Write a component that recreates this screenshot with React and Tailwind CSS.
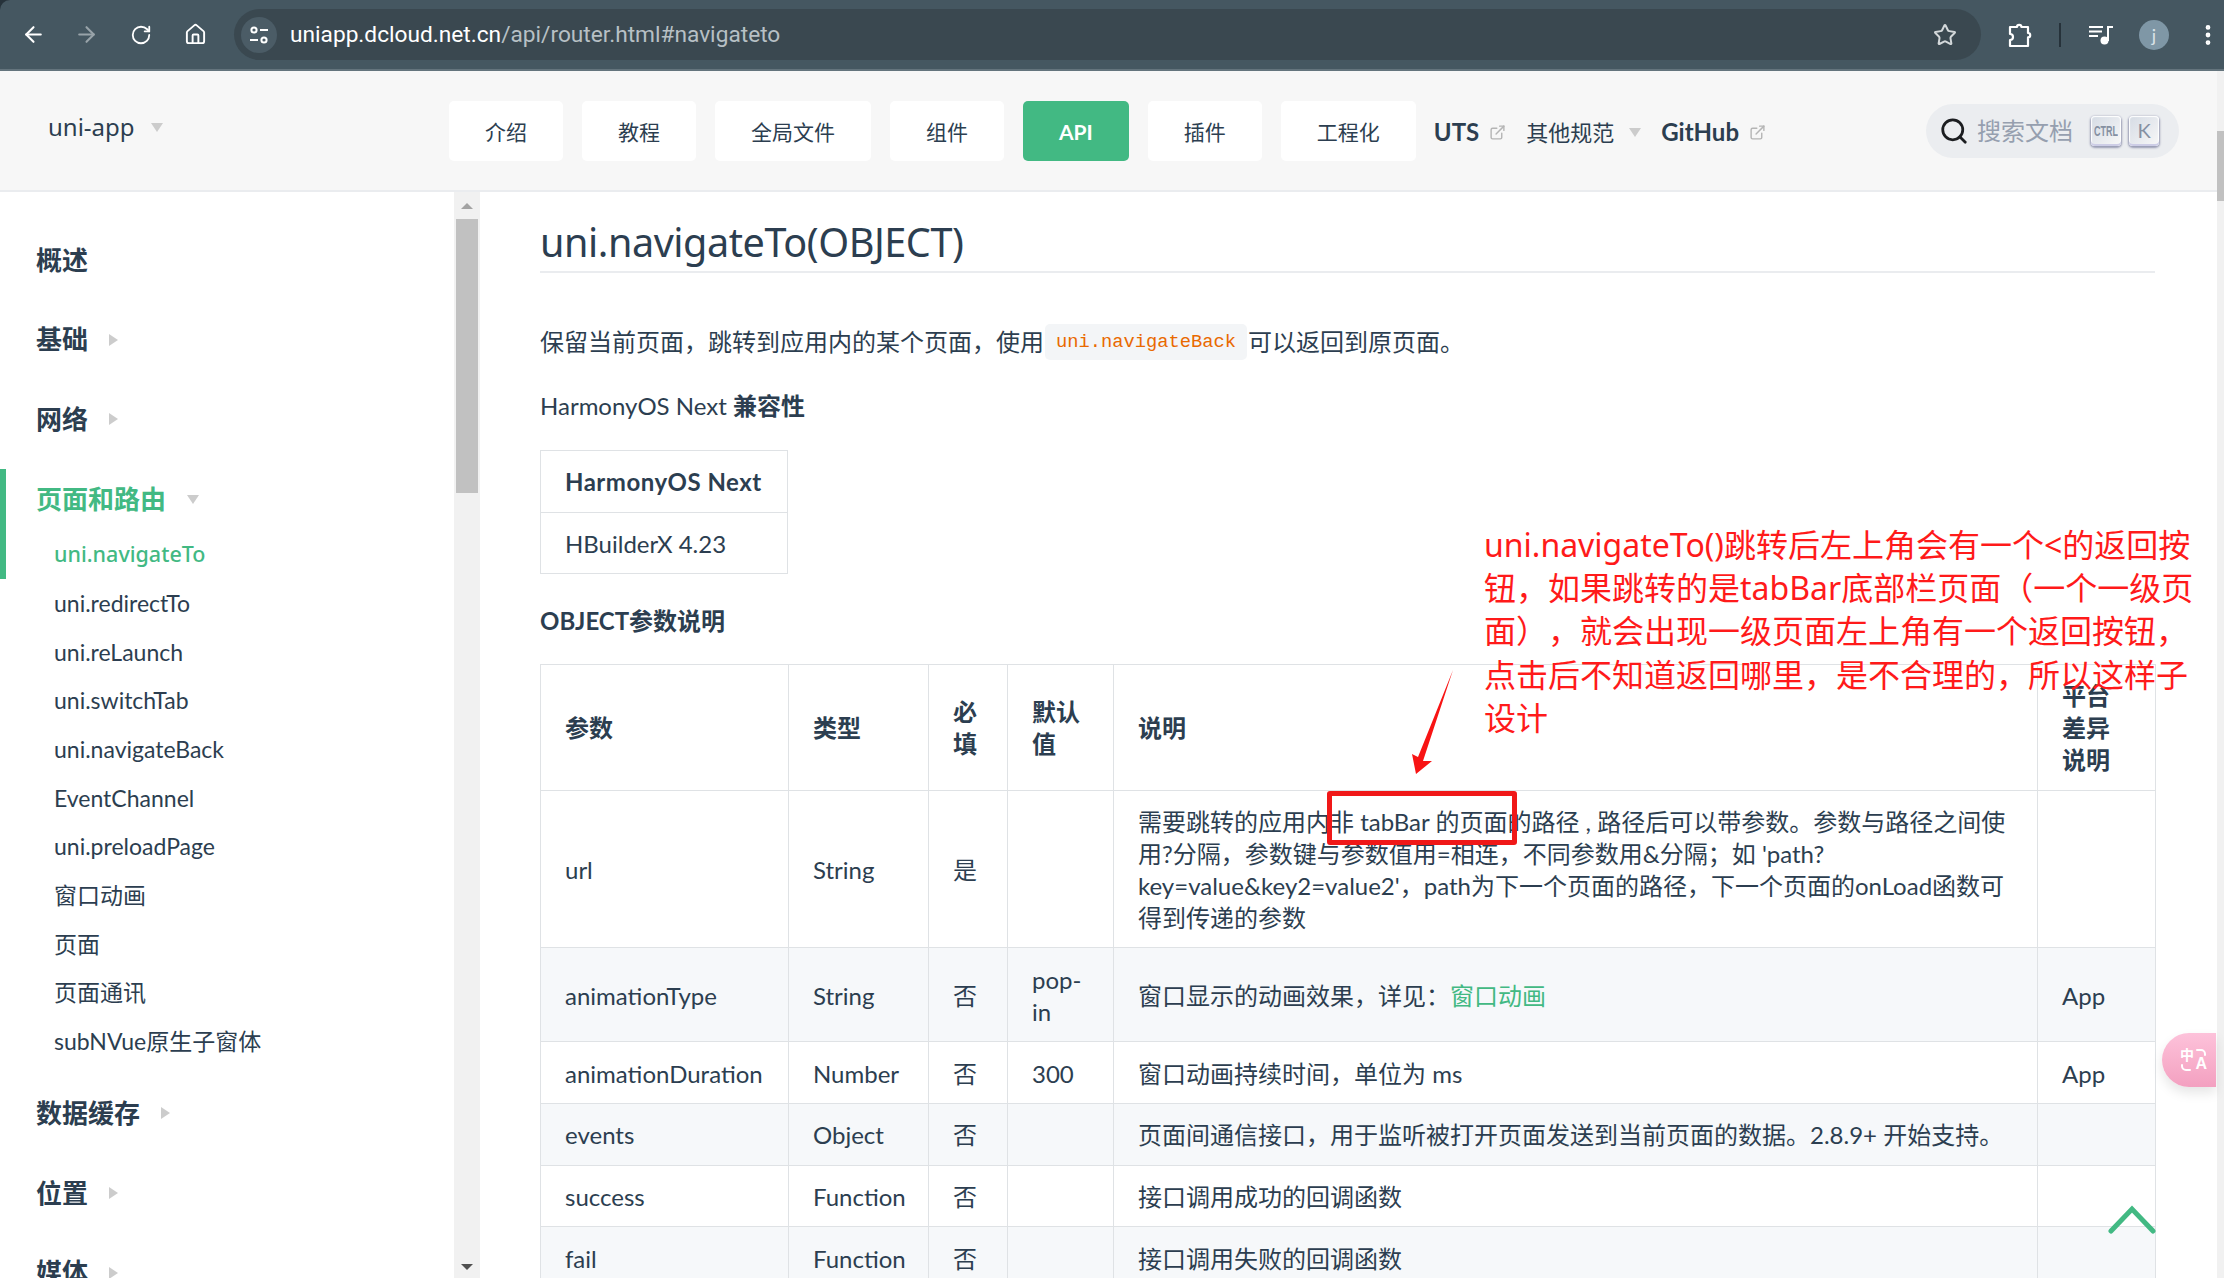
import { ArrowLeft, ArrowRight, RotateCw, Home, Star, EllipsisVertical, Search, ExternalLink } from 'lucide-react'

const navItems = [
  { label: '介绍' },
  { label: '教程' },
  { label: '全局文件' },
  { label: '组件' },
  { label: 'API', active: true },
  { label: '插件' },
  { label: '工程化' },
]

const subItems = [
  'uni.navigateTo',
  'uni.redirectTo',
  'uni.reLaunch',
  'uni.switchTab',
  'uni.navigateBack',
  'EventChannel',
  'uni.preloadPage',
  '窗口动画',
  '页面',
  '页面通讯',
  'subNVue原生子窗体',
]

const rows = [
  ['animationType', 'String', '否', 'pop-in', <>窗口显示的动画效果，详见：<span className="text-[#42b983]">窗口动画</span></>, 'App'],
  ['animationDuration', 'Number', '否', '300', '窗口动画持续时间，单位为 ms', 'App'],
  ['events', 'Object', '否', '', '页面间通信接口，用于监听被打开页面发送到当前页面的数据。2.8.9+ 开始支持。', ''],
  ['success', 'Function', '否', '', '接口调用成功的回调函数', ''],
  ['fail', 'Function', '否', '', '接口调用失败的回调函数', ''],
]

const noteLines = [
  'uni.navigateTo()跳转后左上角会有一个<的返回按',
  '钮，如果跳转的是tabBar底部栏页面（一个一级页',
  '面），就会出现一级页面左上角有一个返回按钮，',
  '点击后不知道返回哪里，是不合理的，所以这样子',
  '设计',
]

const keyCap = "flex h-[30px] w-[30px] items-center justify-center rounded-[4px] bg-[linear-gradient(-225deg,#d5dbe4,#f8f8f8)] pb-[2px] text-[#8590a2] shadow-[inset_0_-2px_0_0_#cdcde6,inset_0_0_1px_1px_#fff,0_1px_2px_1px_rgba(30,35,90,0.4)]"

function Caret({ right = false, className = '' }) {
  return right ? (
    <span className={`inline-block h-0 w-0 border-y-[6px] border-l-[9px] border-y-transparent border-l-[#cccccc] ${className}`} />
  ) : (
    <span className={`inline-block h-0 w-0 border-x-[6px] border-t-[9px] border-x-transparent border-t-[#cccccc] ${className}`} />
  )
}

function ChromeBar() {
  return (
    <div className="bg-[#26323a]">
      <div className="flex h-[69px] items-center rounded-tl-[10px] bg-[#455761] text-white">
        <div className="flex w-[234px] items-center">
          <ArrowLeft size={25} strokeWidth={2} className="ml-[21px]" />
          <ArrowRight size={25} strokeWidth={2} className="ml-[28px] text-[#98a3a9]" />
          <RotateCw size={22} strokeWidth={2} className="ml-[31px]" />
          <Home size={23} strokeWidth={2} className="ml-[32px]" />
        </div>
        <div className="flex h-[51px] w-[1747px] items-center rounded-full bg-[#3a4850] pl-[7px] pr-[24px]">
          <div className="flex h-[36px] w-[36px] items-center justify-center rounded-full bg-[#4b5c66]">
            <svg width="22" height="22" viewBox="0 0 22 22" fill="none" stroke="white" strokeWidth="2">
              <circle cx="6" cy="6" r="2.6" />
              <path d="M12 6h8M2 16h8" />
              <circle cx="16" cy="16" r="2.6" />
            </svg>
          </div>
          <div className="ml-[13px] mt-[1px] font-['Roboto',sans-serif] text-[22.7px] leading-none text-[#b7c0c5]">
            <span className="text-white">uniapp.dcloud.net.cn</span>/api/router.html#navigateto
          </div>
          <Star size={24} strokeWidth={2} className="ml-auto text-[#d3d8da]" />
        </div>
        <svg className="ml-[26px]" width="26" height="26" viewBox="0 0 26 26" fill="none" stroke="white" strokeWidth="2.2" strokeLinejoin="round">
          <path d="M3 5h7a2.2 2.2 0 0 1 4.4 0H21v6a2.2 2.2 0 0 1 0 4.4V24H3v-6a3 3 0 0 0 0-6z" />
        </svg>
        <div className="ml-[26px] h-[24px] w-[2px] bg-[#26323a]" />
        <svg className="ml-[28px]" width="25" height="20" viewBox="0 0 25 20" fill="none" stroke="white" strokeWidth="2">
          <path d="M0 2h14M0 6.5h13M0 11h9M19 16V2h5" />
          <circle cx="15.5" cy="15.5" r="4" fill="white" stroke="none" />
        </svg>
        <div className="ml-[25px] flex h-[30px] w-[30px] items-center justify-center rounded-full bg-[#7f97a6] text-[18px] leading-none text-[#dbe3e8]">j</div>
        <EllipsisVertical size={26} strokeWidth={2.4} className="ml-[26px]" />
      </div>
      <div className="h-[2px] bg-[#64747d]" />
    </div>
  )
}

function Header() {
  return (
    <header className="flex h-[121px] shrink-0 items-center border-b-2 border-[#eaecef] bg-[#f7f7f7] pt-[1px] text-[#2c3e50]">
      <div className="-mt-[8px] flex w-[449px] items-center pl-[48px] font-['Noto_Sans',sans-serif] text-[24px]">
        uni-app
        <Caret className="ml-[16px]" />
      </div>
      <nav className="flex items-center gap-[19px]">
        {navItems.map((n) => (
          <a
            key={n.label}
            className={`flex h-[60px] items-center rounded-[5px] px-[36px] pt-[2px] text-[21px] ${n.active ? 'bg-[#42b983] font-bold text-white' : 'bg-white text-[#2c3e50]'}`}
          >
            {n.label}
          </a>
        ))}
      </nav>
      <div className="ml-[18px] mt-[2px] flex items-center text-[24px] font-bold">
        UTS
        <ExternalLink size={17} className="ml-[10px] text-[#b5b5b5]" />
      </div>
      <div className="ml-[20px] mt-[2px] flex items-center text-[22px]">
        其他规范
        <Caret className="ml-[15px]" />
      </div>
      <div className="ml-[20px] mt-[2px] flex items-center text-[24px] font-bold">
        GitHub
        <ExternalLink size={17} className="ml-[10px] text-[#b5b5b5]" />
      </div>
      <div className="ml-auto mr-[38px] flex h-[54px] w-[253px] items-center rounded-full bg-[#ebedf0] pl-[13px]">
        <Search size={30} strokeWidth={2.2} className="text-[#1c1e21]" />
        <span className="ml-[8px] text-[24px] text-[#969faf]">搜索文档</span>
        <kbd className={`ml-[18px] font-['Liberation_Sans',sans-serif] ${keyCap}`}>
          <span className="inline-block scale-x-[0.6] text-[15px] font-bold leading-none">CTRL</span>
        </kbd>
        <kbd className={`ml-[8px] font-['Lato',sans-serif] text-[20px] font-normal leading-none ${keyCap}`}>K</kbd>
      </div>
    </header>
  )
}

function SectionHead({ label, caret, active, first }) {
  return (
    <div className={`flex h-[48px] items-center text-[26px] font-bold ${first ? '' : 'mt-[31.7px]'} ${active ? 'text-[#42b983]' : 'text-[#2c3e50]'}`}>
      {label}
      {caret === 'right' && <Caret right className="ml-[21px]" />}
      {caret === 'down' && <Caret className="ml-[21px]" />}
    </div>
  )
}

function Sidebar() {
  return (
    <aside className="relative flex w-[480px] shrink-0">
      <div className="absolute left-0 top-[277px] h-[110px] w-[6px] bg-[#42b983]" />
      <div className="min-w-0 flex-1 overflow-hidden pl-[36px] pt-[44px]">
        <SectionHead label="概述" first />
        <SectionHead label="基础" caret="right" />
        <SectionHead label="网络" caret="right" />
        <SectionHead label="页面和路由" caret="down" active />
        <ul className="mt-[7px] pl-[18px] text-[23px] text-[#2c3e50]">
          {subItems.map((s, i) => (
            <li key={s} className={`flex h-[48.7px] items-center ${i === 0 ? "font-['Noto_Sans',sans-serif] text-[21.5px] font-medium text-[#42b983]" : ''}`}>{s}</li>
          ))}
        </ul>
        <div className="-mt-[8px]">
          <SectionHead label="数据缓存" caret="right" />
          <SectionHead label="位置" caret="right" />
          <SectionHead label="媒体" caret="right" />
        </div>
      </div>
      <div className="flex w-[26px] shrink-0 flex-col items-center bg-[#f1f1f1] px-[2px]">
        <div className="flex h-[27px] items-center">
          <span className="h-0 w-0 border-x-[6px] border-b-[6px] border-x-transparent border-b-[#a3a3a3]" />
        </div>
        <div className="h-[274px] w-full bg-[#c1c1c1]" />
        <div className="mb-[5px] mt-auto flex h-[12px] items-center">
          <span className="h-0 w-0 border-x-[6px] border-t-[6px] border-x-transparent border-t-[#505050]" />
        </div>
      </div>
    </aside>
  )
}

const cell = 'border border-[#dfe2e5] px-[24px] pt-[15.4px] pb-[13.4px] text-left align-middle leading-[32px]'

function Content() {
  return (
    <main className="min-w-0 flex-1 overflow-hidden pl-[60px] pr-[62px] text-[24px] leading-[1.35] text-[#2c3e50]">
      <h2 className="mt-[24px] border-b-2 border-[#eaecef] pb-[2px] font-['Noto_Sans','Noto_Sans_CJK_SC',sans-serif] text-[39.6px] font-normal leading-[1.35] tracking-[-0.45px]">uni.navigateTo(OBJECT)</h2>
      <p className="mt-[51px] flex items-center">
        保留当前页面，跳转到应用内的某个页面，使用
        <code className="mx-px rounded-[5px] bg-[#f3f5f7] px-[11px] py-[5px] font-['Liberation_Mono',monospace] text-[18.75px] leading-[26px] text-[#e96900]">uni.navigateBack</code>
        可以返回到原页面。
      </p>
      <p className="mt-[30px]">HarmonyOS Next <strong>兼容性</strong></p>
      <table className="mt-[27px] w-[248px] table-fixed border-collapse">
        <tbody>
          <tr>
            <th className={`${cell} whitespace-nowrap tracking-[0.5px]`}>HarmonyOS Next</th>
          </tr>
          <tr>
            <td className={cell}>HBuilderX 4.23</td>
          </tr>
        </tbody>
      </table>
      <p className="mt-[31px] font-bold">OBJECT参数说明</p>
      <table className="mt-[26px] w-[1615px] table-fixed border-collapse">
        <colgroup>
          <col className="w-[248px]" />
          <col className="w-[140px]" />
          <col className="w-[79px]" />
          <col className="w-[106px]" />
          <col className="w-[924px]" />
          <col className="w-[118px]" />
        </colgroup>
        <thead>
          <tr>
            {['参数', '类型', '必填', '默认值', '说明', '平台差异说明'].map((h) => (
              <th key={h} className={cell}>{h}</th>
            ))}
          </tr>
        </thead>
        <tbody>
          <tr>
            <td className={cell}>url</td>
            <td className={cell}>String</td>
            <td className={cell}>是</td>
            <td className={cell}></td>
            <td className={cell}>
              需要跳转的应用内非 tabBar 的页面的路径 , 路径后可以带参数。参数与路径之间使用?分隔，参数键与参数值用=相连，不同参数用&amp;分隔；如 'path?key=value&amp;key2=value2'，path为下一个页面的路径，下一个页面的onLoad函数可得到传递的参数
            </td>
            <td className={cell}></td>
          </tr>
          {rows.map((r, i) => (
            <tr key={r[0]} className={i % 2 === 0 ? 'bg-[#f6f8fa]' : 'bg-white'}>
              {r.map((c, j) => (
                <td key={j} className={cell}>{c}</td>
              ))}
            </tr>
          ))}
        </tbody>
      </table>
    </main>
  )
}

function Annotations() {
  return (
    <>
      <div className="absolute left-[1484px] top-[523px] font-['Noto_Sans','Noto_Sans_CJK_SC',sans-serif] text-[32px] leading-[43.2px] text-[#ff1a1a] [text-spacing-trim:space-all]">
        {noteLines.map((l) => (
          <div key={l} className="whitespace-nowrap">{l}</div>
        ))}
      </div>
      <div className="absolute left-[1327px] top-[791px] h-[54px] w-[190px] rounded-[3px] border-[5px] border-[#f01818]" />
      <svg className="absolute left-[1405px] top-[665px]" width="55" height="115" viewBox="0 0 55 115" fill="#f81414">
        <polygon points="48,5 18,96 27,96 11,109 7,89 13,92" />
      </svg>
      <div className="absolute left-[2162px] top-[1033px] flex h-[54px] w-[54px] items-center justify-end rounded-l-full bg-gradient-to-b from-[#fdc2da] to-[#f3a0c0] pr-[9px] shadow-[0_6px_12px_rgba(0,0,0,0.1)]">
        <div className="relative h-[24px] w-[27px] font-bold leading-none text-white">
          <span className="absolute left-0 top-0 text-[14px]">中</span>
          <span className="absolute bottom-0 right-0 font-['Liberation_Sans',sans-serif] text-[16px]">A</span>
          <svg className="absolute inset-0" width="27" height="24" viewBox="0 0 27 24" fill="none" stroke="white" strokeWidth="2" strokeLinecap="round">
            <path d="M17 2h4a4 4 0 0 1 4 4v1M2 17v1a4 4 0 0 0 4 4h4" />
          </svg>
        </div>
      </div>
      <svg className="absolute left-[2108px] top-[1205px]" width="48" height="30" viewBox="0 0 48 30" fill="none" stroke="#42b983" strokeWidth="5" strokeLinecap="round" strokeLinejoin="miter">
        <path d="M3 26 L24 4 L45 26" />
      </svg>
    </>
  )
}

export default function App() {
  return (
    <div className="relative flex h-[1278px] w-[2224px] flex-col overflow-hidden bg-white font-['Lato','Noto_Sans_CJK_SC',sans-serif]">
      <ChromeBar />
      <div className="flex min-h-0 flex-1">
        <div className="flex min-w-0 flex-1 flex-col">
          <Header />
          <div className="flex min-h-0 flex-1">
            <Sidebar />
            <Content />
          </div>
        </div>
        <div className="w-[7px] shrink-0 bg-[#f1f1f1]">
          <div className="mt-[60px] h-[70px] w-full bg-[#c1c1c1]" />
        </div>
      </div>
      <Annotations />
    </div>
  )
}
